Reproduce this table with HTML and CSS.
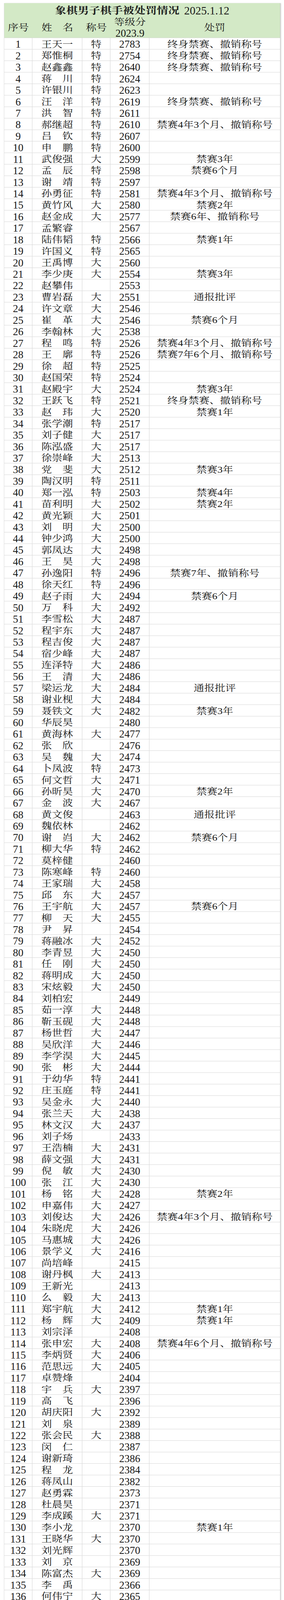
FILE: index.html
```html
<!DOCTYPE html>
<html lang="zh-CN">
<head>
<meta charset="utf-8">
<title>象棋男子棋手被处罚情况 2025.1.12</title>
<link rel="stylesheet" href="styles.css">
</head>
<body>
<div class="sheet">
  <div class="head">
    <div class="title">象棋男子棋手被处罚情况 <span class="tdate">2025.1.12</span></div>
    <div class="cols">
      <div>序号</div>
      <div>姓　名</div>
      <div>称号</div>
      <div class="two"><div>等级分</div><div><span>2023.9</span></div></div>
      <div>处罚</div>
    </div>
  </div>
  <div class="body">
    <div class="r"><div><span>1</span></div><div>王天一</div><div>特</div><div><span>2783</span></div><div>终身禁赛、撤销称号</div></div>
    <div class="r"><div><span>2</span></div><div>郑惟桐</div><div>特</div><div><span>2754</span></div><div>终身禁赛、撤销称号</div></div>
    <div class="r"><div><span>3</span></div><div>赵鑫鑫</div><div>特</div><div><span>2640</span></div><div>终身禁赛、撤销称号</div></div>
    <div class="r"><div><span>4</span></div><div>蒋　川</div><div>特</div><div><span>2624</span></div><div></div></div>
    <div class="r"><div><span>5</span></div><div>许银川</div><div>特</div><div><span>2623</span></div><div></div></div>
    <div class="r"><div><span>6</span></div><div>汪　洋</div><div>特</div><div><span>2619</span></div><div>终身禁赛、撤销称号</div></div>
    <div class="r"><div><span>7</span></div><div>洪　智</div><div>特</div><div><span>2611</span></div><div></div></div>
    <div class="r"><div><span>8</span></div><div>郝继超</div><div>特</div><div><span>2610</span></div><div>禁赛4年3个月、撤销称号</div></div>
    <div class="r"><div><span>9</span></div><div>吕　钦</div><div>特</div><div><span>2607</span></div><div></div></div>
    <div class="r"><div><span>10</span></div><div>申　鹏</div><div>特</div><div><span>2600</span></div><div></div></div>
    <div class="r"><div><span>11</span></div><div>武俊强</div><div>大</div><div><span>2599</span></div><div>禁赛3年</div></div>
    <div class="r"><div><span>12</span></div><div>孟　辰</div><div>特</div><div><span>2598</span></div><div>禁赛6个月</div></div>
    <div class="r"><div><span>13</span></div><div>谢　靖</div><div>特</div><div><span>2597</span></div><div></div></div>
    <div class="r"><div><span>14</span></div><div>孙勇征</div><div>特</div><div><span>2581</span></div><div>禁赛4年3个月、撤销称号</div></div>
    <div class="r"><div><span>15</span></div><div>黄竹风</div><div>大</div><div><span>2580</span></div><div>禁赛2年</div></div>
    <div class="r"><div><span>16</span></div><div>赵金成</div><div>大</div><div><span>2577</span></div><div>禁赛6年、撤销称号</div></div>
    <div class="r"><div><span>17</span></div><div>孟繁睿</div><div></div><div><span>2567</span></div><div></div></div>
    <div class="r"><div><span>18</span></div><div>陆伟韬</div><div>特</div><div><span>2566</span></div><div>禁赛1年</div></div>
    <div class="r"><div><span>19</span></div><div>许国义</div><div>特</div><div><span>2565</span></div><div></div></div>
    <div class="r"><div><span>20</span></div><div>王禹博</div><div>大</div><div><span>2560</span></div><div></div></div>
    <div class="r"><div><span>21</span></div><div>李少庚</div><div>大</div><div><span>2554</span></div><div>禁赛3年</div></div>
    <div class="r"><div><span>22</span></div><div>赵攀伟</div><div></div><div><span>2553</span></div><div></div></div>
    <div class="r"><div><span>23</span></div><div>曹岩磊</div><div>大</div><div><span>2551</span></div><div>通报批评</div></div>
    <div class="r"><div><span>24</span></div><div>许文章</div><div>大</div><div><span>2546</span></div><div></div></div>
    <div class="r"><div><span>25</span></div><div>崔　革</div><div>大</div><div><span>2546</span></div><div>禁赛6个月</div></div>
    <div class="r"><div><span>26</span></div><div>李翰林</div><div>大</div><div><span>2538</span></div><div></div></div>
    <div class="r"><div><span>27</span></div><div>程　鸣</div><div>特</div><div><span>2526</span></div><div>禁赛4年3个月、撤销称号</div></div>
    <div class="r"><div><span>28</span></div><div>王　廓</div><div>特</div><div><span>2526</span></div><div>禁赛7年6个月、撤销称号</div></div>
    <div class="r"><div><span>29</span></div><div>徐　超</div><div>特</div><div><span>2525</span></div><div></div></div>
    <div class="r"><div><span>30</span></div><div>赵国荣</div><div>特</div><div><span>2524</span></div><div></div></div>
    <div class="r"><div><span>31</span></div><div>赵殿宇</div><div>大</div><div><span>2524</span></div><div>禁赛3年</div></div>
    <div class="r"><div><span>32</span></div><div>王跃飞</div><div>特</div><div><span>2521</span></div><div>终身禁赛、撤销称号</div></div>
    <div class="r"><div><span>33</span></div><div>赵　玮</div><div>大</div><div><span>2520</span></div><div>禁赛1年</div></div>
    <div class="r"><div><span>34</span></div><div>张学潮</div><div>特</div><div><span>2517</span></div><div></div></div>
    <div class="r"><div><span>35</span></div><div>刘子健</div><div>大</div><div><span>2517</span></div><div></div></div>
    <div class="r"><div><span>36</span></div><div>陈泓盛</div><div>大</div><div><span>2517</span></div><div></div></div>
    <div class="r"><div><span>37</span></div><div>徐崇峰</div><div>大</div><div><span>2513</span></div><div></div></div>
    <div class="r"><div><span>38</span></div><div>党　斐</div><div>大</div><div><span>2512</span></div><div>禁赛3年</div></div>
    <div class="r"><div><span>39</span></div><div>陶汉明</div><div>特</div><div><span>2511</span></div><div></div></div>
    <div class="r"><div><span>40</span></div><div>郑一泓</div><div>特</div><div><span>2503</span></div><div>禁赛4年</div></div>
    <div class="r"><div><span>41</span></div><div>苗利明</div><div>大</div><div><span>2502</span></div><div>禁赛2年</div></div>
    <div class="r"><div><span>42</span></div><div>黄光颖</div><div>大</div><div><span>2501</span></div><div></div></div>
    <div class="r"><div><span>43</span></div><div>刘　明</div><div>大</div><div><span>2500</span></div><div></div></div>
    <div class="r"><div><span>44</span></div><div>钟少鸿</div><div>大</div><div><span>2500</span></div><div></div></div>
    <div class="r"><div><span>45</span></div><div>郭凤达</div><div>大</div><div><span>2498</span></div><div></div></div>
    <div class="r"><div><span>46</span></div><div>王　昊</div><div>大</div><div><span>2498</span></div><div></div></div>
    <div class="r"><div><span>47</span></div><div>孙逸阳</div><div>特</div><div><span>2496</span></div><div>禁赛7年、撤销称号</div></div>
    <div class="r"><div><span>48</span></div><div>徐天红</div><div>特</div><div><span>2496</span></div><div></div></div>
    <div class="r"><div><span>49</span></div><div>赵子雨</div><div>大</div><div><span>2494</span></div><div>禁赛6个月</div></div>
    <div class="r"><div><span>50</span></div><div>万　科</div><div>大</div><div><span>2492</span></div><div></div></div>
    <div class="r"><div><span>51</span></div><div>李雪松</div><div>大</div><div><span>2487</span></div><div></div></div>
    <div class="r"><div><span>52</span></div><div>程宇东</div><div>大</div><div><span>2487</span></div><div></div></div>
    <div class="r"><div><span>53</span></div><div>程吉俊</div><div>大</div><div><span>2487</span></div><div></div></div>
    <div class="r"><div><span>54</span></div><div>宿少峰</div><div>大</div><div><span>2487</span></div><div></div></div>
    <div class="r"><div><span>55</span></div><div>连泽特</div><div>大</div><div><span>2486</span></div><div></div></div>
    <div class="r"><div><span>56</span></div><div>王　清</div><div>大</div><div><span>2486</span></div><div></div></div>
    <div class="r"><div><span>57</span></div><div>梁运龙</div><div>大</div><div><span>2484</span></div><div>通报批评</div></div>
    <div class="r"><div><span>58</span></div><div>谢业枧</div><div>大</div><div><span>2484</span></div><div></div></div>
    <div class="r"><div><span>59</span></div><div>聂铁文</div><div>大</div><div><span>2482</span></div><div>禁赛3年</div></div>
    <div class="r"><div><span>60</span></div><div>华辰昊</div><div></div><div><span>2480</span></div><div></div></div>
    <div class="r"><div><span>61</span></div><div>黄海林</div><div>大</div><div><span>2477</span></div><div></div></div>
    <div class="r"><div><span>62</span></div><div>张　欣</div><div></div><div><span>2476</span></div><div></div></div>
    <div class="r"><div><span>63</span></div><div>吴　魏</div><div>大</div><div><span>2474</span></div><div></div></div>
    <div class="r"><div><span>64</span></div><div>卜凤波</div><div>特</div><div><span>2473</span></div><div></div></div>
    <div class="r"><div><span>65</span></div><div>何文哲</div><div>大</div><div><span>2471</span></div><div></div></div>
    <div class="r"><div><span>66</span></div><div>孙昕昊</div><div>大</div><div><span>2470</span></div><div>禁赛2年</div></div>
    <div class="r"><div><span>67</span></div><div>金　波</div><div>大</div><div><span>2467</span></div><div></div></div>
    <div class="r"><div><span>68</span></div><div>黄文俊</div><div></div><div><span>2463</span></div><div>通报批评</div></div>
    <div class="r"><div><span>69</span></div><div>魏依林</div><div></div><div><span>2462</span></div><div></div></div>
    <div class="r"><div><span>70</span></div><div>谢　岿</div><div>大</div><div><span>2462</span></div><div>禁赛6个月</div></div>
    <div class="r"><div><span>71</span></div><div>柳大华</div><div>特</div><div><span>2462</span></div><div></div></div>
    <div class="r"><div><span>72</span></div><div>莫梓健</div><div></div><div><span>2460</span></div><div></div></div>
    <div class="r"><div><span>73</span></div><div>陈寒峰</div><div>特</div><div><span>2460</span></div><div></div></div>
    <div class="r"><div><span>74</span></div><div>王家瑞</div><div>大</div><div><span>2458</span></div><div></div></div>
    <div class="r"><div><span>75</span></div><div>邱　东</div><div>大</div><div><span>2457</span></div><div></div></div>
    <div class="r"><div><span>76</span></div><div>王宇航</div><div>大</div><div><span>2457</span></div><div>禁赛6个月</div></div>
    <div class="r"><div><span>77</span></div><div>柳　天</div><div>大</div><div><span>2455</span></div><div></div></div>
    <div class="r"><div><span>78</span></div><div>尹　昇</div><div></div><div><span>2454</span></div><div></div></div>
    <div class="r"><div><span>79</span></div><div>蒋融冰</div><div>大</div><div><span>2452</span></div><div></div></div>
    <div class="r"><div><span>80</span></div><div>李青昱</div><div>大</div><div><span>2450</span></div><div></div></div>
    <div class="r"><div><span>81</span></div><div>任　刚</div><div>大</div><div><span>2450</span></div><div></div></div>
    <div class="r"><div><span>82</span></div><div>蒋明成</div><div>大</div><div><span>2450</span></div><div></div></div>
    <div class="r"><div><span>83</span></div><div>宋炫毅</div><div>大</div><div><span>2450</span></div><div></div></div>
    <div class="r"><div><span>84</span></div><div>刘柏宏</div><div></div><div><span>2449</span></div><div></div></div>
    <div class="r"><div><span>85</span></div><div>茹一淳</div><div>大</div><div><span>2448</span></div><div></div></div>
    <div class="r"><div><span>86</span></div><div>靳玉砚</div><div>大</div><div><span>2448</span></div><div></div></div>
    <div class="r"><div><span>87</span></div><div>杨世哲</div><div>大</div><div><span>2447</span></div><div></div></div>
    <div class="r"><div><span>88</span></div><div>吴欣洋</div><div>大</div><div><span>2446</span></div><div></div></div>
    <div class="r"><div><span>89</span></div><div>李学淏</div><div>大</div><div><span>2445</span></div><div></div></div>
    <div class="r"><div><span>90</span></div><div>张　彬</div><div>大</div><div><span>2444</span></div><div></div></div>
    <div class="r"><div><span>91</span></div><div>于幼华</div><div>特</div><div><span>2441</span></div><div></div></div>
    <div class="r"><div><span>92</span></div><div>庄玉庭</div><div>特</div><div><span>2441</span></div><div></div></div>
    <div class="r"><div><span>93</span></div><div>吴金永</div><div>大</div><div><span>2440</span></div><div></div></div>
    <div class="r"><div><span>94</span></div><div>张兰天</div><div>大</div><div><span>2438</span></div><div></div></div>
    <div class="r"><div><span>95</span></div><div>林文汉</div><div>大</div><div><span>2437</span></div><div></div></div>
    <div class="r"><div><span>96</span></div><div>刘子炀</div><div></div><div><span>2433</span></div><div></div></div>
    <div class="r"><div><span>97</span></div><div>王浩楠</div><div>大</div><div><span>2431</span></div><div></div></div>
    <div class="r"><div><span>98</span></div><div>薛文强</div><div>大</div><div><span>2431</span></div><div></div></div>
    <div class="r"><div><span>99</span></div><div>倪　敏</div><div>大</div><div><span>2430</span></div><div></div></div>
    <div class="r"><div><span>100</span></div><div>张　江</div><div>大</div><div><span>2430</span></div><div></div></div>
    <div class="r"><div><span>101</span></div><div>杨　铭</div><div>大</div><div><span>2428</span></div><div>禁赛2年</div></div>
    <div class="r"><div><span>102</span></div><div>申嘉伟</div><div>大</div><div><span>2427</span></div><div></div></div>
    <div class="r"><div><span>103</span></div><div>刘俊达</div><div>大</div><div><span>2426</span></div><div>禁赛4年3个月、撤销称号</div></div>
    <div class="r"><div><span>104</span></div><div>朱晓虎</div><div>大</div><div><span>2426</span></div><div></div></div>
    <div class="r"><div><span>105</span></div><div>马惠城</div><div>大</div><div><span>2426</span></div><div></div></div>
    <div class="r"><div><span>106</span></div><div>景学义</div><div>大</div><div><span>2416</span></div><div></div></div>
    <div class="r"><div><span>107</span></div><div>尚培峰</div><div></div><div><span>2415</span></div><div></div></div>
    <div class="r"><div><span>108</span></div><div>谢丹枫</div><div>大</div><div><span>2413</span></div><div></div></div>
    <div class="r"><div><span>109</span></div><div>王新光</div><div></div><div><span>2413</span></div><div></div></div>
    <div class="r"><div><span>110</span></div><div>么　毅</div><div>大</div><div><span>2413</span></div><div></div></div>
    <div class="r"><div><span>111</span></div><div>郑宇航</div><div>大</div><div><span>2412</span></div><div>禁赛1年</div></div>
    <div class="r"><div><span>112</span></div><div>杨　辉</div><div>大</div><div><span>2409</span></div><div>禁赛1年</div></div>
    <div class="r"><div><span>113</span></div><div>刘宗泽</div><div></div><div><span>2408</span></div><div></div></div>
    <div class="r"><div><span>114</span></div><div>张申宏</div><div>大</div><div><span>2408</span></div><div>禁赛4年6个月、撤销称号</div></div>
    <div class="r"><div><span>115</span></div><div>李炳贤</div><div>大</div><div><span>2406</span></div><div></div></div>
    <div class="r"><div><span>116</span></div><div>范思远</div><div>大</div><div><span>2405</span></div><div></div></div>
    <div class="r"><div><span>117</span></div><div>卓赞烽</div><div></div><div><span>2404</span></div><div></div></div>
    <div class="r"><div><span>118</span></div><div>宇　兵</div><div>大</div><div><span>2397</span></div><div></div></div>
    <div class="r"><div><span>119</span></div><div>高　飞</div><div></div><div><span>2396</span></div><div></div></div>
    <div class="r"><div><span>120</span></div><div>胡庆阳</div><div>大</div><div><span>2392</span></div><div></div></div>
    <div class="r"><div><span>121</span></div><div>刘　泉</div><div></div><div><span>2389</span></div><div></div></div>
    <div class="r"><div><span>122</span></div><div>张会民</div><div>大</div><div><span>2388</span></div><div></div></div>
    <div class="r"><div><span>123</span></div><div>闵　仁</div><div></div><div><span>2387</span></div><div></div></div>
    <div class="r"><div><span>124</span></div><div>谢新琦</div><div></div><div><span>2386</span></div><div></div></div>
    <div class="r"><div><span>125</span></div><div>程　龙</div><div></div><div><span>2384</span></div><div></div></div>
    <div class="r"><div><span>126</span></div><div>蒋凤山</div><div></div><div><span>2382</span></div><div></div></div>
    <div class="r"><div><span>127</span></div><div>赵勇霖</div><div></div><div><span>2373</span></div><div></div></div>
    <div class="r"><div><span>128</span></div><div>杜晨昊</div><div></div><div><span>2371</span></div><div></div></div>
    <div class="r"><div><span>129</span></div><div>李成蹊</div><div>大</div><div><span>2371</span></div><div></div></div>
    <div class="r"><div><span>130</span></div><div>李小龙</div><div></div><div><span>2370</span></div><div>禁赛1年</div></div>
    <div class="r"><div><span>131</span></div><div>王晓华</div><div>大</div><div><span>2370</span></div><div></div></div>
    <div class="r"><div><span>132</span></div><div>刘光辉</div><div></div><div><span>2370</span></div><div></div></div>
    <div class="r"><div><span>133</span></div><div>刘　京</div><div></div><div><span>2369</span></div><div></div></div>
    <div class="r"><div><span>134</span></div><div>陈富杰</div><div>大</div><div><span>2369</span></div><div></div></div>
    <div class="r"><div><span>135</span></div><div>李　禹</div><div></div><div><span>2366</span></div><div></div></div>
    <div class="r"><div><span>136</span></div><div>何伟宁</div><div>大</div><div><span>2365</span></div><div></div></div>
  </div>
</div>
</body>
</html>
```

FILE: styles.css
```css
* {
  box-sizing: border-box;
}

html,
body {
  margin: 0;
  padding: 0;
  background: #ffffff;
}

body {
  font-family: "Liberation Serif", "Noto Serif CJK SC", "Noto Sans CJK SC", serif;
  color: #161616;
  line-height: 1;
}

.sheet {
  margin: 8.4px 0 0 10px;
  width: 709px;
  border-left: 1px solid #dedede;
  border-right: 1px solid #bdbdbd;
  box-shadow: 2px 0 3px rgba(0, 0, 0, 0.12);
  background: #ffffff;
  transform: scaleY(0.841);
  transform-origin: 0 0;
}

.head {
  background: #d3e9c6;
  border-bottom: 1px solid #cdd5c9;
}

.title {
  height: 40px;
  display: flex;
  align-items: center;
  justify-content: center;
  gap: 12px;
  padding-top: 4px;
  font-size: 29px;
  line-height: 30px;
  font-weight: 700;
  white-space: nowrap;
  color: #1c1c1c;
}

.title .tdate {
  display: inline-block;
  font-weight: 400;
  line-height: 24px;
  transform: scaleY(1.22);
}

.cols,
.r {
  display: grid;
  grid-template-columns: 72px 128px 72px 100px 1fr;
}

.cols {
  height: 65px;
  grid-template-rows: 65px;
  font-size: 27px;
  line-height: 30px;
}

.cols > div {
  display: flex;
  align-items: center;
  justify-content: center;
  text-align: center;
  white-space: nowrap;
  padding-top: 2px;
}

.cols > .two {
  flex-direction: column;
  gap: 4px;
}

.cols > .two span {
  display: inline-block;
  line-height: 22px;
  transform: scaleY(1.22);
}

.r {
  height: 35px;
  grid-template-rows: 34px;
  border-bottom: 1px solid #d0d0d0;
  font-size: 27px;
  line-height: 28px;
}

.r > div {
  display: flex;
  align-items: center;
  justify-content: center;
  height: 34px;
  padding-top: 3px;
  white-space: nowrap;
  border-right: 1px solid #d3d3d3;
}

.r > div:last-child {
  border-right: 0;
}

.r span {
  display: inline-block;
  line-height: 22px;
  transform: scaleY(1.22);
}
```
